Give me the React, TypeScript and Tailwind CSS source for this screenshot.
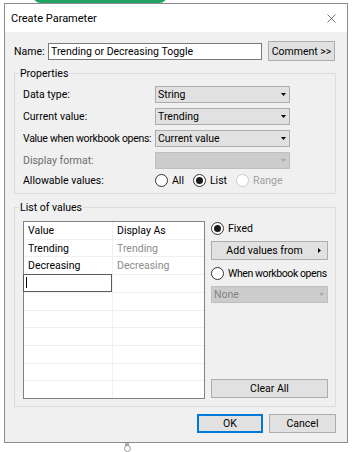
import { X } from "lucide-react";

function Arrow({ disabled }: { disabled?: boolean }) {
  return (
    <svg width="5" height="3" viewBox="0 0 5 3" className="shrink-0">
      <path d="M0 0h5L2.5 3z" fill={disabled ? "#a8a8a8" : "#000"} />
    </svg>
  );
}

function Select({ value, disabled, className = "" }: { value?: string; disabled?: boolean; className?: string }) {
  return (
    <div
      className={`flex h-[17px] items-center justify-between border pl-[2px] pr-[3px] ${
        disabled ? "border-[#bfbfbf] bg-[#cccccc] text-[#838383]" : "border-[#adadad] bg-[#e1e1e1] text-black"
      } ${className}`}
    >
      <span>{value}</span>
      <Arrow disabled={disabled} />
    </div>
  );
}

function Radio({
  checked,
  disabled,
  label,
  tight,
}: {
  checked?: boolean;
  disabled?: boolean;
  label: string;
  tight?: boolean;
}) {
  return (
    <div className="flex items-center gap-[4px] whitespace-nowrap">
      <span
        className={`flex h-[13px] w-[13px] items-center justify-center rounded-full border bg-white ${
          disabled ? "border-[#cccccc]" : "border-[#333333]"
        }`}
      >
        {checked && <span className="h-[7px] w-[7px] rounded-full bg-[#1a1a1a]" />}
      </span>
      <span className={`${disabled ? "text-[#a0a0a0]" : "text-black"} ${tight ? "tracking-[-0.4px]" : ""}`}>
        {label}
      </span>
    </div>
  );
}

const rows = [
  ["Value", "Display As"],
  ["Trending", "Trending"],
  ["Decreasing", "Decreasing"],
  ["", ""],
  ["", ""],
  ["", ""],
  ["", ""],
  ["", ""],
  ["", ""],
  ["", ""],
];

export default function App() {
  return (
    <div className="relative h-[452px] w-[354px] overflow-hidden bg-white font-[Roboto,'Liberation_Sans',sans-serif] text-[10.5px] leading-[15px] text-black">
      {/* bits of the workbook behind the dialog */}
      <div className="absolute left-[33px] top-[-12px] h-[15px] w-[134px] rounded-full bg-[#21a366]" />
      <span className="absolute left-[-6px] top-[34px] text-[17px] leading-[20px]">r</span>
      <span className="absolute left-[125px] top-[443px] h-[3px] w-[4px] bg-[#b0b0b0]" />
      <span className="absolute left-[124px] top-[445px] h-[7px] w-[7px] rounded-full border border-[#9a9a9a]" />

      <div className="ml-[4px] mt-[3px] flex h-[440px] w-[344px] flex-col border border-[#8c8c8c] bg-[#f0f0f0]">
        <div className="flex h-[28px] items-center justify-between bg-white pl-[6px] pr-[8px]">
          <span className="text-[11px]">Create Parameter</span>
          <X size={15} strokeWidth={1} color="#222" />
        </div>

        <div className="flex flex-1 flex-col whitespace-nowrap pl-[9px] pr-[11px]">
          <div className="mt-[9px] flex h-[20px] items-center">
            <span className="w-[34px]">Name:</span>
            <div className="flex h-[17px] w-[214px] items-center border border-[#7a7a7a] bg-white pl-[2px]">
              Trending or Decreasing Toggle
            </div>
            <button className="ml-[6px] h-[20px] w-[67px] border border-[#adadad] bg-[#e1e1e1]">Comment &gt;&gt;</button>
          </div>

          <fieldset className="mt-[5px] h-[128px] border border-[#dcdcdc] p-0">
            <legend className="ml-[4px] px-[1px]">Properties</legend>
            <div className="flex flex-col gap-[5px] pl-[8px] pt-[5px]">
              <div className="flex h-[17px] items-center">
                <span className="w-[132px]">Data type:</span>
                <Select value="String" className="w-[135px]" />
              </div>
              <div className="flex h-[17px] items-center">
                <span className="w-[132px]">Current value:</span>
                <Select value="Trending" className="w-[135px]" />
              </div>
              <div className="flex h-[17px] items-center">
                <span className="w-[132px] tracking-[-0.3px]">Value when workbook opens:</span>
                <Select value="Current value" className="w-[135px]" />
              </div>
              <div className="flex h-[17px] items-center">
                <span className="w-[132px] text-[#6d6d6d]">Display format:</span>
                <Select disabled className="w-[135px]" />
              </div>
              <div className="flex h-[13px] items-center">
                <span className="w-[132px]">Allowable values:</span>
                <div className="flex items-center gap-[9px]">
                  <Radio label="All" />
                  <Radio label="List" checked />
                  <Radio label="Range" disabled />
                </div>
              </div>
            </div>
          </fieldset>

          <fieldset className="mt-[6px] h-[207px] border border-[#dcdcdc] p-0">
            <legend className="ml-[4px] px-[1px]">List of values</legend>
            <div className="flex pl-[8px] pr-[6px] pt-[6px]">
              <div className="flex h-[178px] w-[182px] flex-col border border-[#828282] bg-white">
                {rows.map(([v, d], i) => (
                  <div key={i} className={`flex flex-1 ${i < rows.length - 1 ? "border-b border-[#f0f0f0]" : ""}`}>
                    <div className="relative flex w-[89px] items-center border-r border-[#f0f0f0] pl-[4px]">
                      {v}
                      {i === 3 && (
                        <div className="absolute -left-px -top-px bottom-0 right-0 flex items-center border border-[#5a5a5a] bg-white pl-[2px]">
                          <span className="h-[11px] w-px bg-black" />
                        </div>
                      )}
                    </div>
                    <div className={`flex flex-1 items-center pl-[4px] ${i === 0 ? "text-black" : "text-[#8b8b8b]"}`}>{d}</div>
                  </div>
                ))}
              </div>

              <div className="ml-[6px] flex w-[117px] flex-col pb-[1px]">
                <div className="flex h-[14px] items-center">
                  <Radio label="Fixed" checked />
                </div>
                <button className="relative mt-[6px] h-[19px] border border-[#adadad] bg-[#e1e1e1] pr-[10px]">
                  Add values from
                  <svg width="3" height="5" viewBox="0 0 3 5" className="absolute right-[6px] top-[6px]">
                    <path d="M0 0v5l3-2.5z" fill="#000" />
                  </svg>
                </button>
                <div className="mt-[6px] flex h-[14px] items-center">
                  <Radio label="When workbook opens" tight />
                </div>
                <Select value="None" disabled className="mt-[6px]" />
                <button className="mt-auto h-[19px] border border-[#adadad] bg-[#e1e1e1]">Clear All</button>
              </div>
            </div>
          </fieldset>

          <div className="mt-[7px] flex justify-end gap-[6px]">
            <button className="h-[19px] w-[66px] border-2 border-[#0078d7] bg-[#e1e1e1]">OK</button>
            <button className="h-[19px] w-[67px] border border-[#adadad] bg-[#e1e1e1]">Cancel</button>
          </div>
        </div>
      </div>
    </div>
  );
}
